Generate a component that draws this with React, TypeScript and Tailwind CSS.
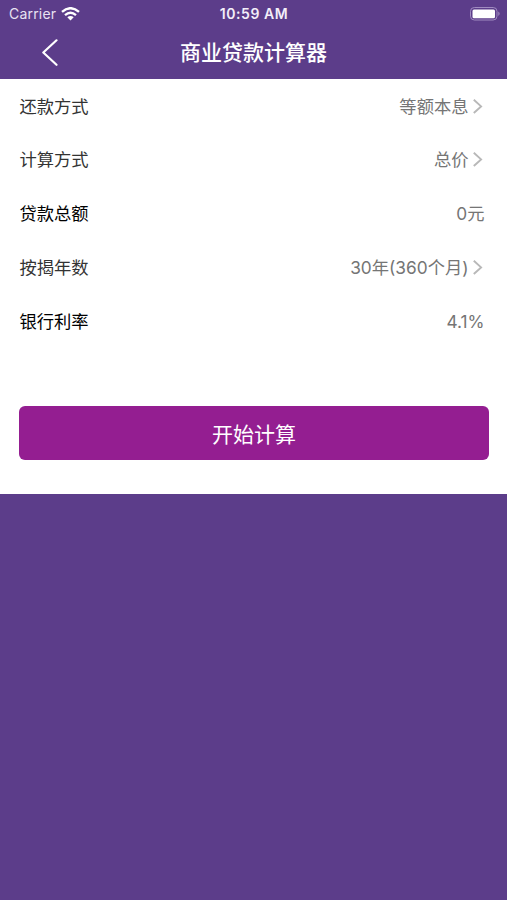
import React from "react";

type RowProps = { label: string; value: string; arrow?: boolean; strong?: boolean };

const Row = ({ label, value, arrow, strong }: RowProps) => (
  <div className="flex h-[53.75px] items-center justify-between pl-[19.5px] pr-[22.5px] pt-[1.5px]">
    <span className={strong ? "text-[17.3px] text-black" : "text-[17.3px] text-[#333333]"}>{label}</span>
    <span className="flex items-center text-[17.3px] text-[#757575]">
      {value}
      {arrow && (
        <svg width="12" height="16" viewBox="0 0 12 16" fill="none" stroke="#b8b8b8" strokeWidth="1.9" className="ml-[4px]">
          <path d="M.8 .8L8.1 7.4L.8 14" />
        </svg>
      )}
    </span>
  </div>
);

export default function App() {
  return (
    <div className="flex h-[900px] w-[507px] flex-col overflow-hidden bg-[#5c3d8a] font-[Inter,'Noto_Sans_CJK_SC',sans-serif]">
      <header className="h-[79px] text-white">
        <div className="grid h-[27px] grid-cols-[1fr_80px_1fr] items-center pl-[9px] pr-[6px]">
          <div className="flex items-center gap-[5px] text-[14px] tracking-[0.2px] text-[#e9e2f2]">
            <span>Carrier</span>
            <svg width="19" height="14" viewBox="0 0 19 14" fill="none" stroke="white" strokeWidth="2.4">
              <path d="M1 4.8Q9.5-2.4 18 4.8M4 8.1Q9.5 3.6 15 8.1" />
              <path d="M6.3 10.2Q9.5 7.6 12.7 10.2L9.5 13.4Z" fill="white" stroke="none" />
            </svg>
          </div>
          <div className="-ml-[2px] whitespace-nowrap text-center text-[14px] font-semibold tracking-[0.55px] text-[#f3eef9]">10:59 AM</div>
          <svg width="31" height="14" viewBox="0 0 31 14" className="justify-self-end">
            <rect x=".5" y=".5" width="26.5" height="12.5" rx="3.8" fill="none" stroke="#a08bc0" />
            <rect x="2.5" y="2.5" width="22.5" height="8.7" rx="1.5" fill="white" />
            <path d="M28.3 4.5Q31 6.7 28.3 9Z" fill="#a08bc0" />
          </svg>
        </div>
        <div className="grid h-[52px] grid-cols-[80px_1fr_80px] items-center">
          <svg width="18" height="28" viewBox="0 0 18 28" fill="none" stroke="white" strokeWidth="2.2" strokeLinecap="round" strokeLinejoin="round" className="ml-[41px]">
            <path d="M15.5 1.3L2.3 13.5L15.5 25.8" />
          </svg>
          <h1 className="text-center text-[21px] font-medium">商业贷款计算器</h1>
        </div>
      </header>
      <main className="h-[415px] bg-white">
        <Row label="还款方式" value="等额本息" arrow />
        <Row label="计算方式" value="总价" arrow />
        <Row label="贷款总额" value="0元" strong />
        <Row label="按揭年数" value="30年(360个月)" arrow />
        <Row label="银行利率" value="4.1%" strong />
        <button className="ml-[19px] mt-[58.5px] block h-[54px] w-[470px] rounded-[6px] bg-[#941e91] pt-[2px] text-[21px] text-white">开始计算</button>
      </main>
    </div>
  );
}
